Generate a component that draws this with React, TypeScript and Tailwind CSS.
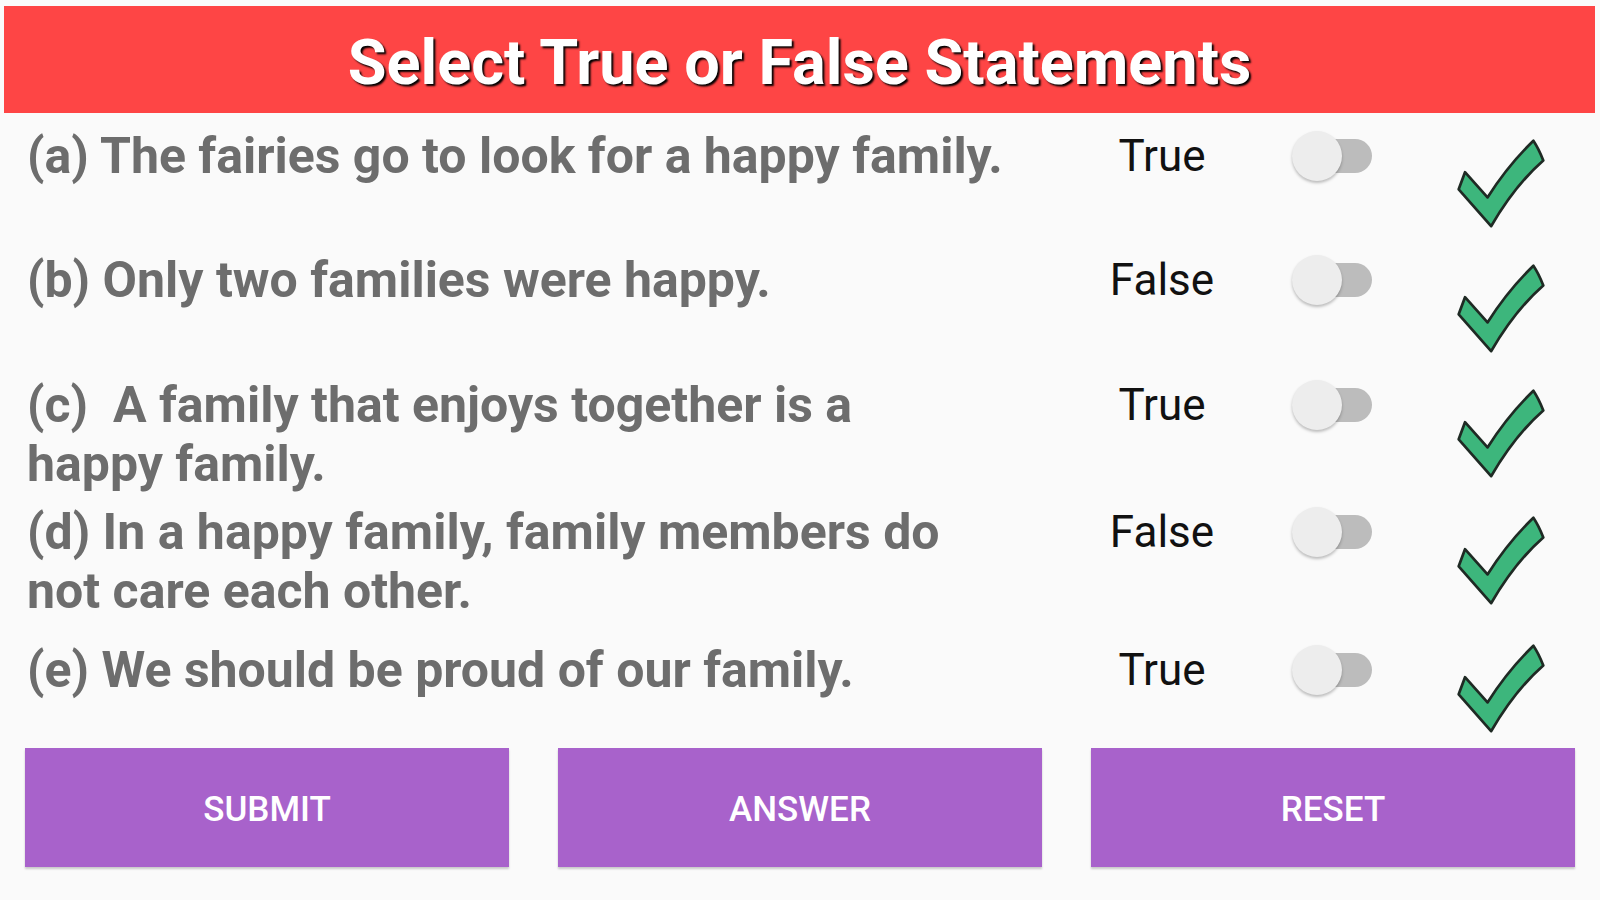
import React from 'react';

const statements = [
  { text: ['(a) The fairies go to look for a happy family.'], label: 'True', h: 'h-[124px]', check: 'mt-[11px]' },
  { text: ['(b) Only two families were happy.'], label: 'False', h: 'h-[125px]', check: 'mt-[12px]' },
  { text: ['(c)\u00a0 A family that enjoys together is a', 'happy family.'], label: 'True', h: 'h-[127px]', check: 'mt-[12px]' },
  { text: ['(d) In a happy family, family members do', 'not care each other.'], label: 'False', h: 'h-[138px]', check: 'mt-[12px]' },
  { text: ['(e) We should be proud of our family.'], label: 'True', h: 'h-[107px]', check: 'mt-[2px]' }
];

const CheckMark = () => (
  <svg width="90" height="90" viewBox="0 0 100 100">
    <path
      d="M3 57 L10 38 L35 66 Q58 30 86 3 Q92 12 97 25 Q66 52 39 98 Z"
      fill="#3db67c"
      stroke="#1f2a24"
      strokeWidth="3"
      strokeLinejoin="round"
    />
  </svg>
);

const Toggle = () => (
  <div className="relative w-[80px] h-[59px]">
    <div className="absolute left-[8px] top-[12px] w-[72px] h-[34px] rounded-full bg-[#bcbcbc]"></div>
    <div className="absolute left-0 top-[4px] w-[50px] h-[50px] rounded-full bg-[#ededed] shadow-[0_2px_3px_rgba(0,0,0,0.25)]"></div>
  </div>
);

const App = () => {
  return (
    <div className="min-h-screen bg-[#fafafa] pt-[6px] font-[Roboto,'Liberation_Sans',sans-serif]">
      <div className="ml-[4px] mr-[5px] h-[107px] bg-[#fe4545] flex items-center justify-center">
        <h1 className="mt-[6px] text-[63px] font-bold text-white leading-none [text-shadow:2px_2px_2px_#000]">
          Select True or False Statements
        </h1>
      </div>

      <div className="mt-[14px]">
        {statements.map((s, i) => (
          <div key={i} className={`flex items-start ${s.h}`}>
            <div className="w-[1077px] pl-[27px] text-[50px] font-bold leading-[59px] text-[#6d6d6d]">
              {s.text.map((line, j) => (
                <div key={j}>{line}</div>
              ))}
            </div>
            <div className="w-[170px] text-center text-[44px] leading-[59px] text-[#111111]">{s.label}</div>
            <div className="ml-[45px]">
              <Toggle />
            </div>
            <div className={`ml-[84px] ${s.check}`}>
              <CheckMark />
            </div>
          </div>
        ))}
      </div>

      <div className="grid grid-cols-3 gap-[49px] px-[25px]">
        {['SUBMIT', 'ANSWER', 'RESET'].map((b) => (
          <button
            key={b}
            className="h-[119px] pt-[5px] bg-[#a862cb] text-white text-[35px] font-medium shadow-[0_2px_2px_rgba(0,0,0,0.2)]"
          >
            {b}
          </button>
        ))}
      </div>
    </div>
  );
};

export default App;
